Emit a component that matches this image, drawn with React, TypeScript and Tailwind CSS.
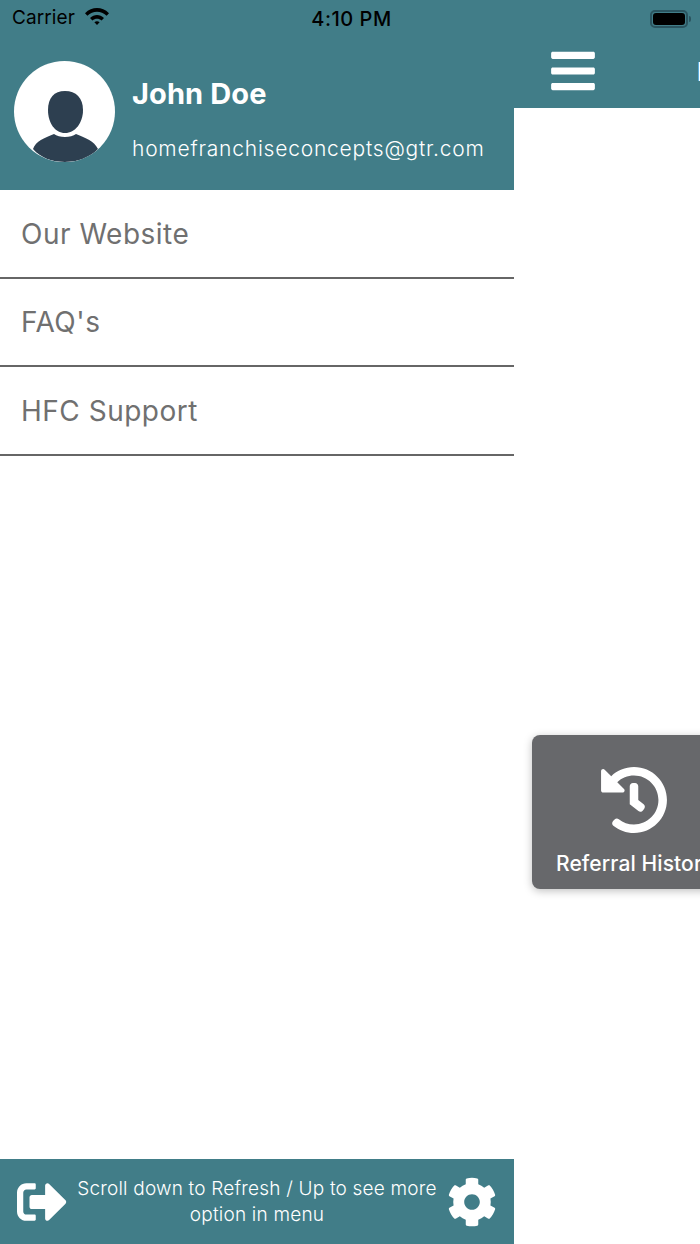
import React from 'react';
import { FaBars, FaCog, FaHistory, FaSignOutAlt } from 'react-icons/fa';

const menuItems = ['Our Website', "FAQ's", 'HFC Support'];

const StatusBar: React.FC = () => (
  <div className="flex h-[36px] shrink-0 items-center justify-between pl-[12px] pr-[9px] pt-[1px] text-[19px] text-black">
    <div className="flex w-[200px] items-center gap-[9px]">
      <span className="tracking-[0.1px]">Carrier</span>
      <svg width="26" height="18" viewBox="0 0 26 18" className="-mt-[5px]">
        <path d="M1 6.2C8 -0.6 18 -0.6 25 6.2L22.6 8.7C17 3.4 9 3.4 3.4 8.7Z" fill="#000" />
        <path d="M6 11C10.2 7 15.8 7 20 11L17.6 13.5C14.8 11 11.2 11 8.4 13.5Z" fill="#000" />
        <path d="M10.4 15.2C12 13.8 14 13.8 15.6 15.2L13 18Z" fill="#000" />
      </svg>
    </div>
    <span className="text-[20px] font-medium tracking-[0.5px]">4:10 PM</span>
    <div className="flex w-[200px] items-center justify-end">
      <div className="h-[18px] w-[38px] rounded-[5px] border-2 border-[#2b5560] p-[1px]">
        <div className="h-full w-full rounded-[3px] bg-black" />
      </div>
      <div className="ml-[1px] h-[6px] w-[2px] rounded-r-sm bg-[#2b5560]" />
    </div>
  </div>
);

const Avatar: React.FC = () => (
  <div className="h-[101px] w-[101px] shrink-0 overflow-hidden rounded-full bg-white">
    <svg width="101" height="101" viewBox="0 0 101 101" className="blur-[0.7px]">
      <path d="M51 30C62 30 69 37 69 49C69 62 61 72 51 72C41 72 34 62 34 49C34 37 40 30 51 30Z" fill="#2d3f50" />
      <path d="M19 88C22 80 30 77 40 73C45 77 57 77 62 73C72 77 80 80 84 88C76 97 64 101 51 101C38 101 27 97 19 88Z" fill="#2d3f50" />
    </svg>
  </div>
);

export default function App() {
  return (
    <div className="flex h-[1244px] w-[700px] flex-col overflow-hidden bg-[#417d88] font-['Inter',sans-serif]">
      <StatusBar />
      <div className="flex min-h-0 flex-1">
        {/* drawer */}
        <div className="flex w-[514px] shrink-0 flex-col bg-white">
          <div className="flex h-[154px] shrink-0 items-start gap-[17px] bg-[#417d88] pl-[14px] pt-[25px]">
            <Avatar />
            <div className="text-white">
              <div className="mt-[13px] text-[29px] leading-[40px] font-bold tracking-[0.1px]">John Doe</div>
              <div className="mt-[21px] text-[21px] leading-[28px] font-light tracking-[0.78px] whitespace-nowrap">homefranchiseconcepts@gtr.com</div>
            </div>
          </div>
          <div className="flex-1">
            {menuItems.map((item) => (
              <div key={item} className="flex h-[88.5px] items-center border-b-2 border-[#666] pb-[1px] pl-[21px] pt-[2px] text-[28px] tracking-[0.5px] text-[#707070]">
                {item}
              </div>
            ))}
          </div>
          <div className="flex h-[85px] shrink-0 items-center bg-[#417d88] pl-[17px] text-white">
            <FaSignOutAlt className="h-[50px] w-[50px] shrink-0" />
            <div className="w-[380px] shrink-0 px-[5px] text-center text-[19px] leading-[26px] font-light tracking-[0.2px]">
              Scroll down to Refresh / Up to see more option in menu
            </div>
            <FaCog className="h-[50px] w-[50px] shrink-0" />
          </div>
        </div>

        {/* page behind the drawer */}
        <div className="flex min-w-0 flex-1 flex-col bg-white">
          <div className="flex h-[72px] shrink-0 items-center gap-[101px] bg-[#417d88] pb-[2px] pl-[36px]">
            <FaBars className="h-[50px] w-[46px] shrink-0 text-white" />
            <span className="text-[26px] font-bold text-white">History</span>
          </div>
          <div className="flex flex-1 items-start overflow-hidden pl-[18px] pt-[627px]">
            <div className="flex h-[154px] w-[200px] shrink-0 flex-col items-start rounded-[8px] bg-[#67686b] pl-[24px] shadow-[0_2px_8px_rgba(0,0,0,0.25)]">
              <FaHistory className="ml-[44px] mt-[31px] h-[68px] w-[68px] shrink-0 text-white" />
              <div className="mt-[14px] text-[21px] font-medium tracking-[0.1px] whitespace-nowrap text-white">Referral History</div>
            </div>
          </div>
        </div>
      </div>
    </div>
  );
}
